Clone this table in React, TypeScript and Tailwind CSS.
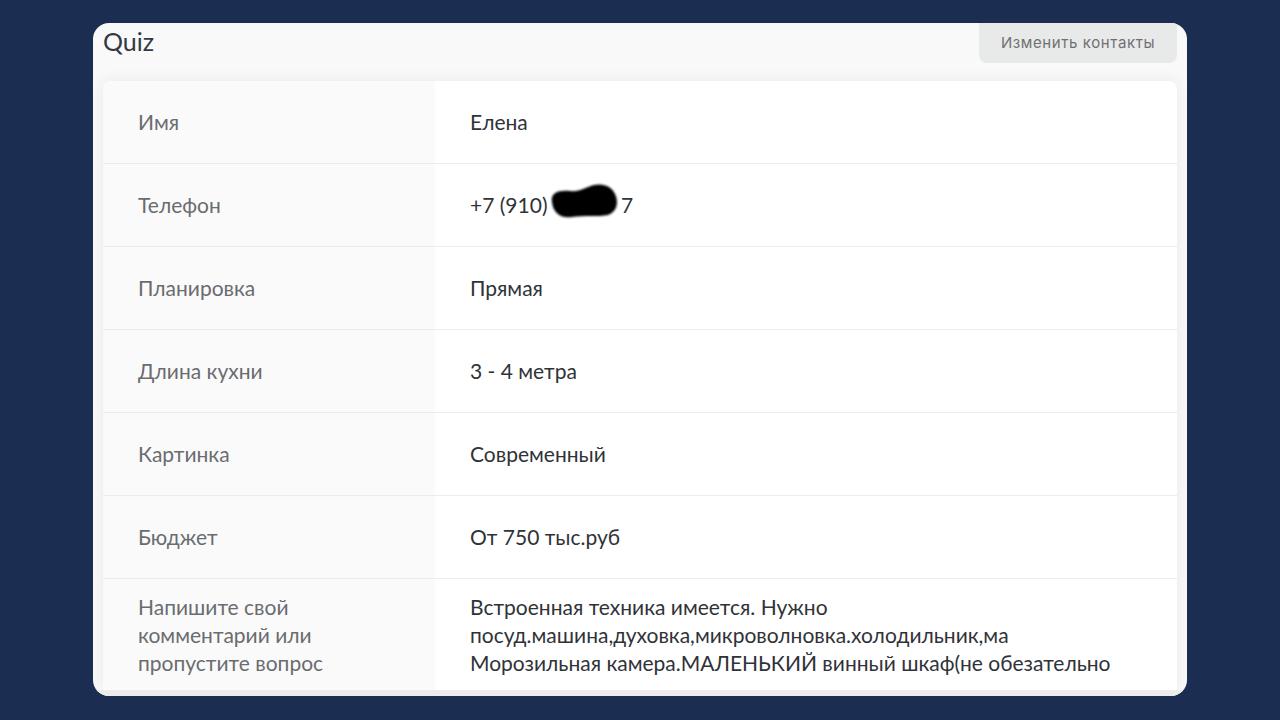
const rows: { label: string; value: React.ReactNode }[] = [
  { label: 'Имя', value: 'Елена' },
  {
    label: 'Телефон',
    value: (
      <span className="relative inline-block">
        +7 (910) <span className="inline-block w-[68px]" />
        7
        <svg className="absolute left-[78px] top-[-9px]" width="76" height="44" viewBox="0 0 76 44">
          <defs>
            <filter id="blur" x="-20%" y="-20%" width="140%" height="140%">
              <feGaussianBlur stdDeviation="1.2" />
            </filter>
          </defs>
          <path
            d="M4 22 C2 12 12 10 22 11 C32 12 38 7 46 5 C56 3 64 7 67 14 C71 22 69 32 60 35 C50 37 36 35 24 37 C12 39 5 32 4 22 Z"
            fill="#000"
            filter="url(#blur)"
          />
        </svg>
      </span>
    ),
  },
  { label: 'Планировка', value: 'Прямая' },
  { label: 'Длина кухни', value: '3 - 4 метра' },
  { label: 'Картинка', value: 'Современный' },
  { label: 'Бюджет', value: 'От 750 тыс.руб' },
];

export default function App() {
  return (
    <div className="w-[1280px] h-[720px] bg-[#1b2d51] pt-[23px] px-[93px] overflow-hidden font-['Lato','Liberation_Sans',sans-serif]">
      <div className="h-[673px] bg-[#f9f9f9] rounded-[16px] px-[10px] flex flex-col overflow-hidden">
        <div className="flex justify-between items-start h-[58px]">
          <h1 className="text-[25px] leading-[36px] text-[#333842]">Quiz</h1>
          <button className="h-[40px] w-[198px] bg-[#e8e9e9] rounded-b-[8px] text-[15px] text-[#707072] font-['Inter','Liberation_Sans',sans-serif] tracking-[0.6px]">
            Изменить контакты
          </button>
        </div>
        <div className="bg-white rounded-t-[8px] overflow-hidden shadow-[0_0_16px_rgba(0,0,0,0.07)]">
          {rows.map((r) => (
            <div key={r.label} className="flex h-[83px] border-b border-[#ececec]">
              <div className="w-[332px] bg-[#fafafa] pl-[35px] flex items-center text-[21px] text-[#6a6c70]">
                {r.label}
              </div>
              <div className="flex-1 pl-[35px] flex items-center text-[21px] text-[#2f3338]">
                {r.value}
              </div>
            </div>
          ))}
          <div className="flex h-[111px]">
            <div className="w-[332px] bg-[#fafafa] pl-[35px] pt-[14px] text-[21px] leading-[28px] text-[#6a6c70]">
              Напишите свой
              <br />
              комментарий или
              <br />
              пропустите вопрос
            </div>
            <div className="flex-1 pl-[35px] pt-[14px] text-[21px] leading-[28px] text-[#2f3338]">
              Встроенная техника имеется. Нужно
              <br />
              посуд.машина,духовка,микроволновка.холодильник,ма
              <br />
              Морозильная камера.МАЛЕНЬКИЙ винный шкаф(не обезательно
            </div>
          </div>
        </div>
        <div className="flex-1 bg-[#ececec] -mx-[10px] px-[10px]">
          <div className="h-full" />
        </div>
      </div>
    </div>
  );
}
